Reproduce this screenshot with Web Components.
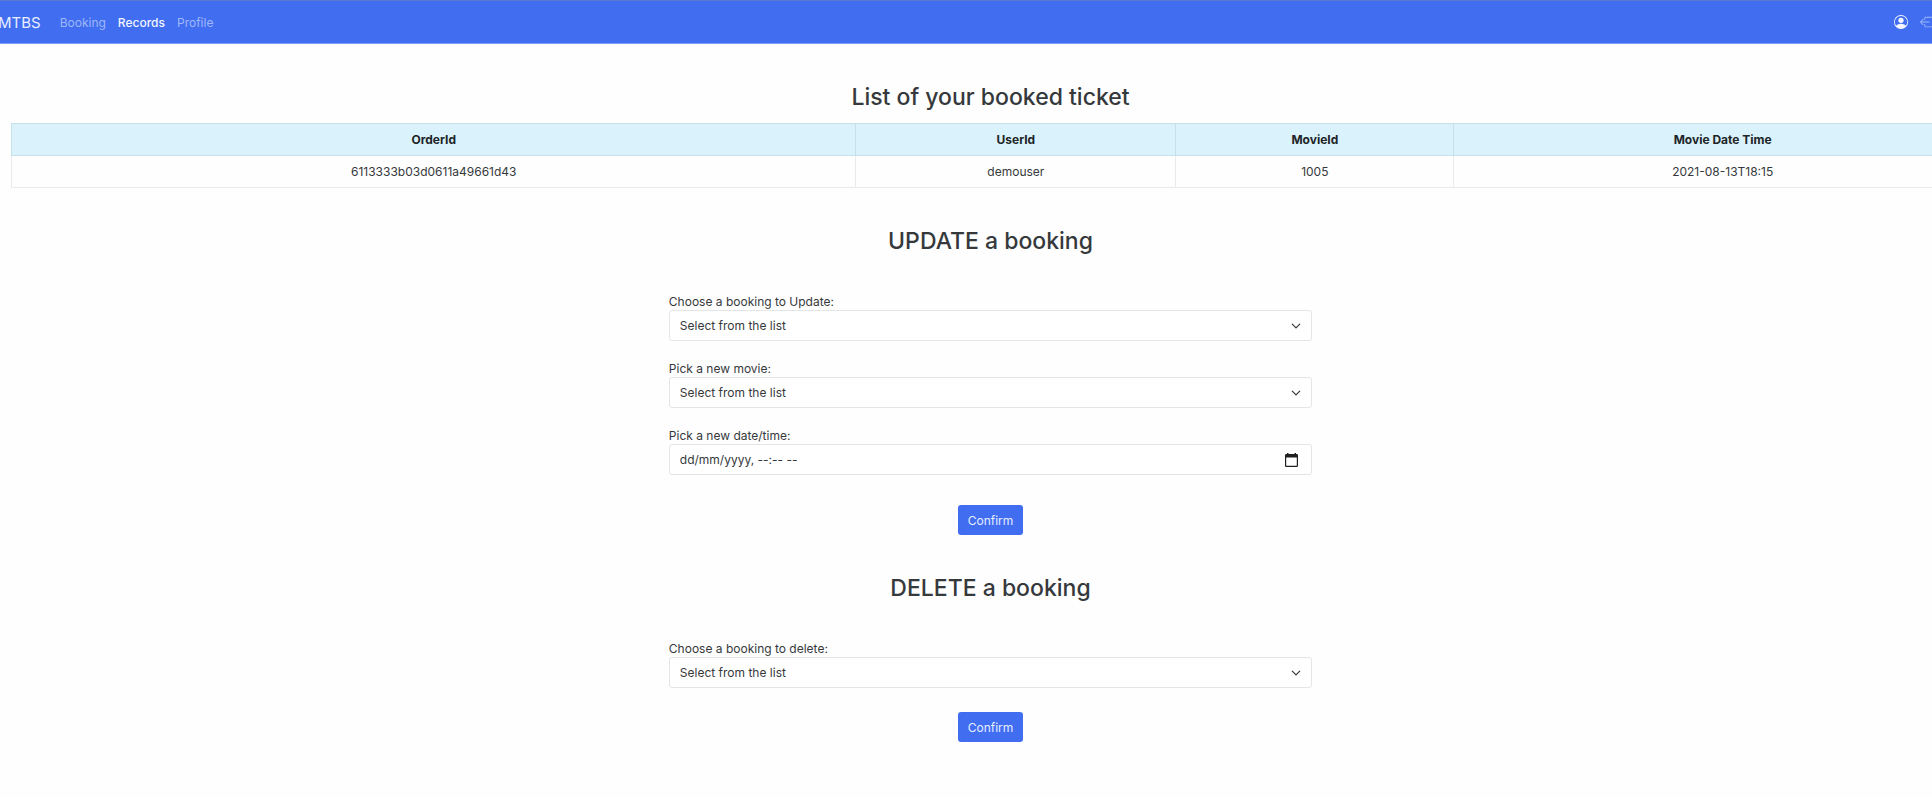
<!DOCTYPE html>
<html lang="en">
<head>
<meta charset="utf-8">
<title>MTBS - Records</title>
<style>
  html, body { margin: 0; }
  body {
    --primary: #416ef1;
    --border: #e8eaeb;
    overflow: hidden;
    min-height: 100vh;
    background: #fefefe;
    color: #36393c;
    font: 12px/19px Inter, "Noto Sans", sans-serif;
  }
</style>
</head>
<body>
<mtbs-app></mtbs-app>

<script>
const define = (name, html, setup) => {
  const template = document.createElement('template');
  template.innerHTML = html;
  customElements.define(name, class extends HTMLElement {
    connectedCallback() {
      if (this.shadowRoot) return;
      this.attachShadow({ mode: 'open' }).append(template.content.cloneNode(true));
      if (setup) setup(this, this.shadowRoot);
    }
  });
};

define('mtbs-navbar', `
  <style>
    :host { display: block; background: var(--primary); border-top: 1px solid #5c78cf; border-bottom: 1px solid #7d9bf6; }
    nav { display: flex; align-items: center; height: 42px; }
    a { color: #9fb7fa; text-decoration: none; }
    .brand { color: #e8eefe; font-size: 15px; margin: 0 13px 0 -2px; }
    .links { display: flex; flex: 1; }
    .links a { padding: 6px; }
    .links a[aria-current] { color: #f2f5ff; font-weight: 500; }
    .tools { display: flex; gap: 12px; margin-right: -2px; }
    svg { display: block; width: 14px; height: 14px; fill: currentColor; }
    .user { color: #f4f7ff; }
  </style>
  <nav aria-label="Main">
    <a class="brand" href="#home">MTBS</a>
    <div class="links">
      <a href="#booking">Booking</a>
      <a href="#records" aria-current="page">Records</a>
      <a href="#profile">Profile</a>
    </div>
    <div class="tools">
      <a class="user" href="#account" aria-label="Account"><svg viewBox="0 0 16 16"><path d="M11 6a3 3 0 1 1-6 0 3 3 0 0 1 6 0z"/><path fill-rule="evenodd" d="M0 8a8 8 0 1 1 16 0A8 8 0 0 1 0 8zm8-7a7 7 0 0 0-5.468 11.37C3.242 11.226 4.805 10 8 10s4.757 1.225 5.468 2.37A7 7 0 0 0 8 1z"/></svg></a>
      <a href="#logout" aria-label="Log out"><svg viewBox="0 0 16 16"><path fill-rule="evenodd" d="M6 12.5a.5.5 0 0 0 .5.5h8a.5.5 0 0 0 .5-.5v-9a.5.5 0 0 0-.5-.5h-8a.5.5 0 0 0-.5.5v2a.5.5 0 0 1-1 0v-2A1.5 1.5 0 0 1 6.500 2h8A1.500 1.500 0 0 1 16 3.500v9a1.500 1.500 0 0 1-1.500 1.500h-8A1.500 1.500 0 0 1 5 12.500v-2a.5.5 0 0 1 1 0v2z"/><path fill-rule="evenodd" d="M.146 8.354a.5.5 0 0 1 0-.708l3-3a.5.5 0 1 1 .708.708L1.707 7.500H10.500a.5.5 0 0 1 0 1H1.707l2.147 2.146a.5.5 0 0 1-.708.708l-3-3z"/></svg></a>
    </div>
  </nav>`);

define('mtbs-tickets', `
  <style>
    :host { display: block; }
    table { width: 100%; table-layout: fixed; border-collapse: collapse; text-align: center; }
    th, td { height: 31px; padding: 0; border: 1px solid var(--border); }
    th { background: #d9f2fb; border-color: #c8e0e8; color: #202427; font-weight: 700; }
    .order { width: 42.6%; }
    .user { width: 16.1%; }
    .movie { width: 14%; }
  </style>
  <table>
    <thead><tr>
      <th class="order" scope="col">OrderId</th><th class="user" scope="col">UserId</th>
      <th class="movie" scope="col">MovieId</th><th scope="col">Movie Date Time</th>
    </tr></thead>
    <tbody><tr><td>6113333b03d0611a49661d43</td><td>demouser</td><td>1005</td><td>2021-08-13T18:15</td></tr></tbody>
  </table>`);

define('mtbs-select', `
  <style>
    :host { display: block; }
    label { display: block; line-height: 17px; }
    select {
      display: block; width: 100%; height: 31px; box-sizing: border-box; padding: 0 28px 0 10px;
      appearance: none; border: 1px solid #e3e5e7; border-radius: 3px; color: inherit; font: inherit;
      background: #fff url("data:image/svg+xml,%3Csvg xmlns='http://www.w3.org/2000/svg' viewBox='0 0 16 16'%3E%3Cpath fill='none' stroke='%23343a40' stroke-linecap='round' stroke-linejoin='round' stroke-width='2' d='M2 5l6 6 6-6'/%3E%3C/svg%3E") no-repeat right 10px center / 10px 10px;
    }
  </style>
  <label for="choice"></label>
  <select id="choice"><option>Select from the list</option></select>`,
  (host, root) => { root.querySelector('label').textContent = host.getAttribute('label'); });

define('mtbs-datetime', `
  <style>
    :host { display: block; }
    label { display: block; line-height: 17px; }
    .box { display: flex; align-items: center; height: 31px; box-sizing: border-box; padding: 0 13px 0 10px; border: 1px solid #e3e5e7; border-radius: 3px; background: #fff; }
    input { flex: 1; min-width: 0; padding: 0; border: 0; outline: 0; background: none; color: inherit; font: inherit; }
    input::placeholder { color: inherit; opacity: 1; }
    button { padding: 0; border: 0; background: none; color: #202020; }
    svg { display: block; width: 13px; height: 14px; }
  </style>
  <label for="when"></label>
  <div class="box">
    <input id="when" type="text" placeholder="dd/mm/yyyy, --:-- --">
    <button type="button" aria-label="Open calendar"><svg viewBox="0 0 13 14"><path fill="currentColor" fill-rule="evenodd" d="M2 0h1.500v1h6V0H11v1h.7A1.300 1.300 0 0 1 13 2.300v10.400a1.300 1.300 0 0 1-1.300 1.300H1.300A1.300 1.300 0 0 1 0 12.700V2.300A1.300 1.300 0 0 1 1.300 1H2zM1.200 4.600v8.200h10.600V4.600z"/></svg></button>
  </div>`,
  (host, root) => { root.querySelector('label').textContent = host.getAttribute('label'); });

define('mtbs-section', `
  <style>
    :host { display: block; }
    h2 { margin: 0; font-size: 23px; line-height: 30px; font-weight: 500; text-align: center; }
    form { display: flex; flex-direction: column; gap: 19px; width: calc(100% / 3 - 17px); margin: 37px auto 0; }
    button {
      align-self: center; height: 30px; margin-top: var(--button-gap, 11px); padding: 0 10px;
      border: 0; border-radius: 3px; background: var(--primary); color: #e6edff; font: inherit;
    }
  </style>
  <h2></h2>
  <form><slot></slot><button type="button">Confirm</button></form>`,
  (host, root) => { root.querySelector('h2').textContent = host.getAttribute('heading'); });

define('mtbs-app', `
  <style>
    :host { display: block; }
    main { width: calc(100% + 49px); padding-top: 38px; }
    h2 { margin: 0 0 11px; font-size: 23px; line-height: 30px; font-weight: 500; text-align: center; }
    mtbs-tickets { margin: 0 -11px 38px 11px; }
    .delete { margin-top: 38px; --button-gap: 5px; }
  </style>
  <mtbs-navbar></mtbs-navbar>
  <main>
    <h2>List of your booked ticket</h2>
    <mtbs-tickets></mtbs-tickets>
    <mtbs-section heading="UPDATE a booking">
      <mtbs-select label="Choose a booking to Update:"></mtbs-select>
      <mtbs-select label="Pick a new movie:"></mtbs-select>
      <mtbs-datetime label="Pick a new date/time:"></mtbs-datetime>
    </mtbs-section>
    <mtbs-section class="delete" heading="DELETE a booking">
      <mtbs-select label="Choose a booking to delete:"></mtbs-select>
    </mtbs-section>
  </main>`);
</script>
</body>
</html>
